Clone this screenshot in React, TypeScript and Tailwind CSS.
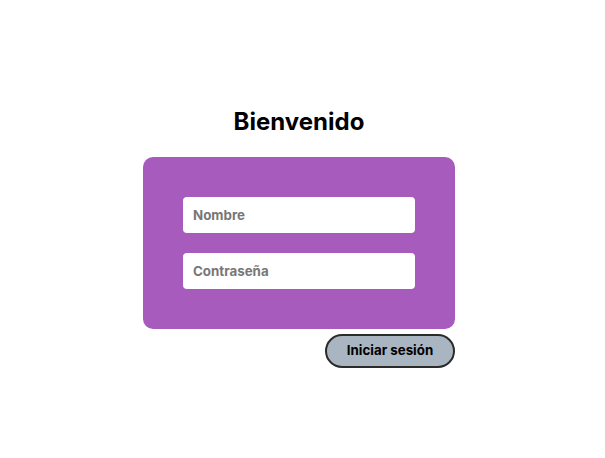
import React from 'react';

const App: React.FC = () => {
  return (
    <div className="min-h-screen bg-white font-['Inter','Liberation_Sans',sans-serif] flex flex-col items-center pt-[106px] pr-[7px]">
      <h1 className="text-2xl leading-8 font-bold text-black mb-[19px]">Bienvenido</h1>
      <div className="w-[312px] flex flex-col">
        <form className="bg-[#a75bbc] rounded-[10px] px-10 py-10 flex flex-col gap-5">
          <input
            type="text"
            placeholder="Nombre"
            className="h-9 w-full bg-white rounded-[4px] px-[10px] text-[13.333px] font-bold text-black placeholder:text-[#777777] outline-none font-['Inter','Liberation_Sans',sans-serif]"
          />
          <input
            type="password"
            placeholder="Contraseña"
            className="h-9 w-full bg-white rounded-[4px] px-[10px] text-[13.333px] font-bold text-black placeholder:text-[#777777] outline-none font-['Inter','Liberation_Sans',sans-serif]"
          />
        </form>
        <div className="flex justify-end mt-[5px]">
          <button className="w-[130px] h-[34px] rounded-full bg-[#a9b5c1] border-2 border-[#2b2b2b] text-[13.333px] font-bold text-black">
            Iniciar sesión
          </button>
        </div>
      </div>
    </div>
  );
};

export default App;
